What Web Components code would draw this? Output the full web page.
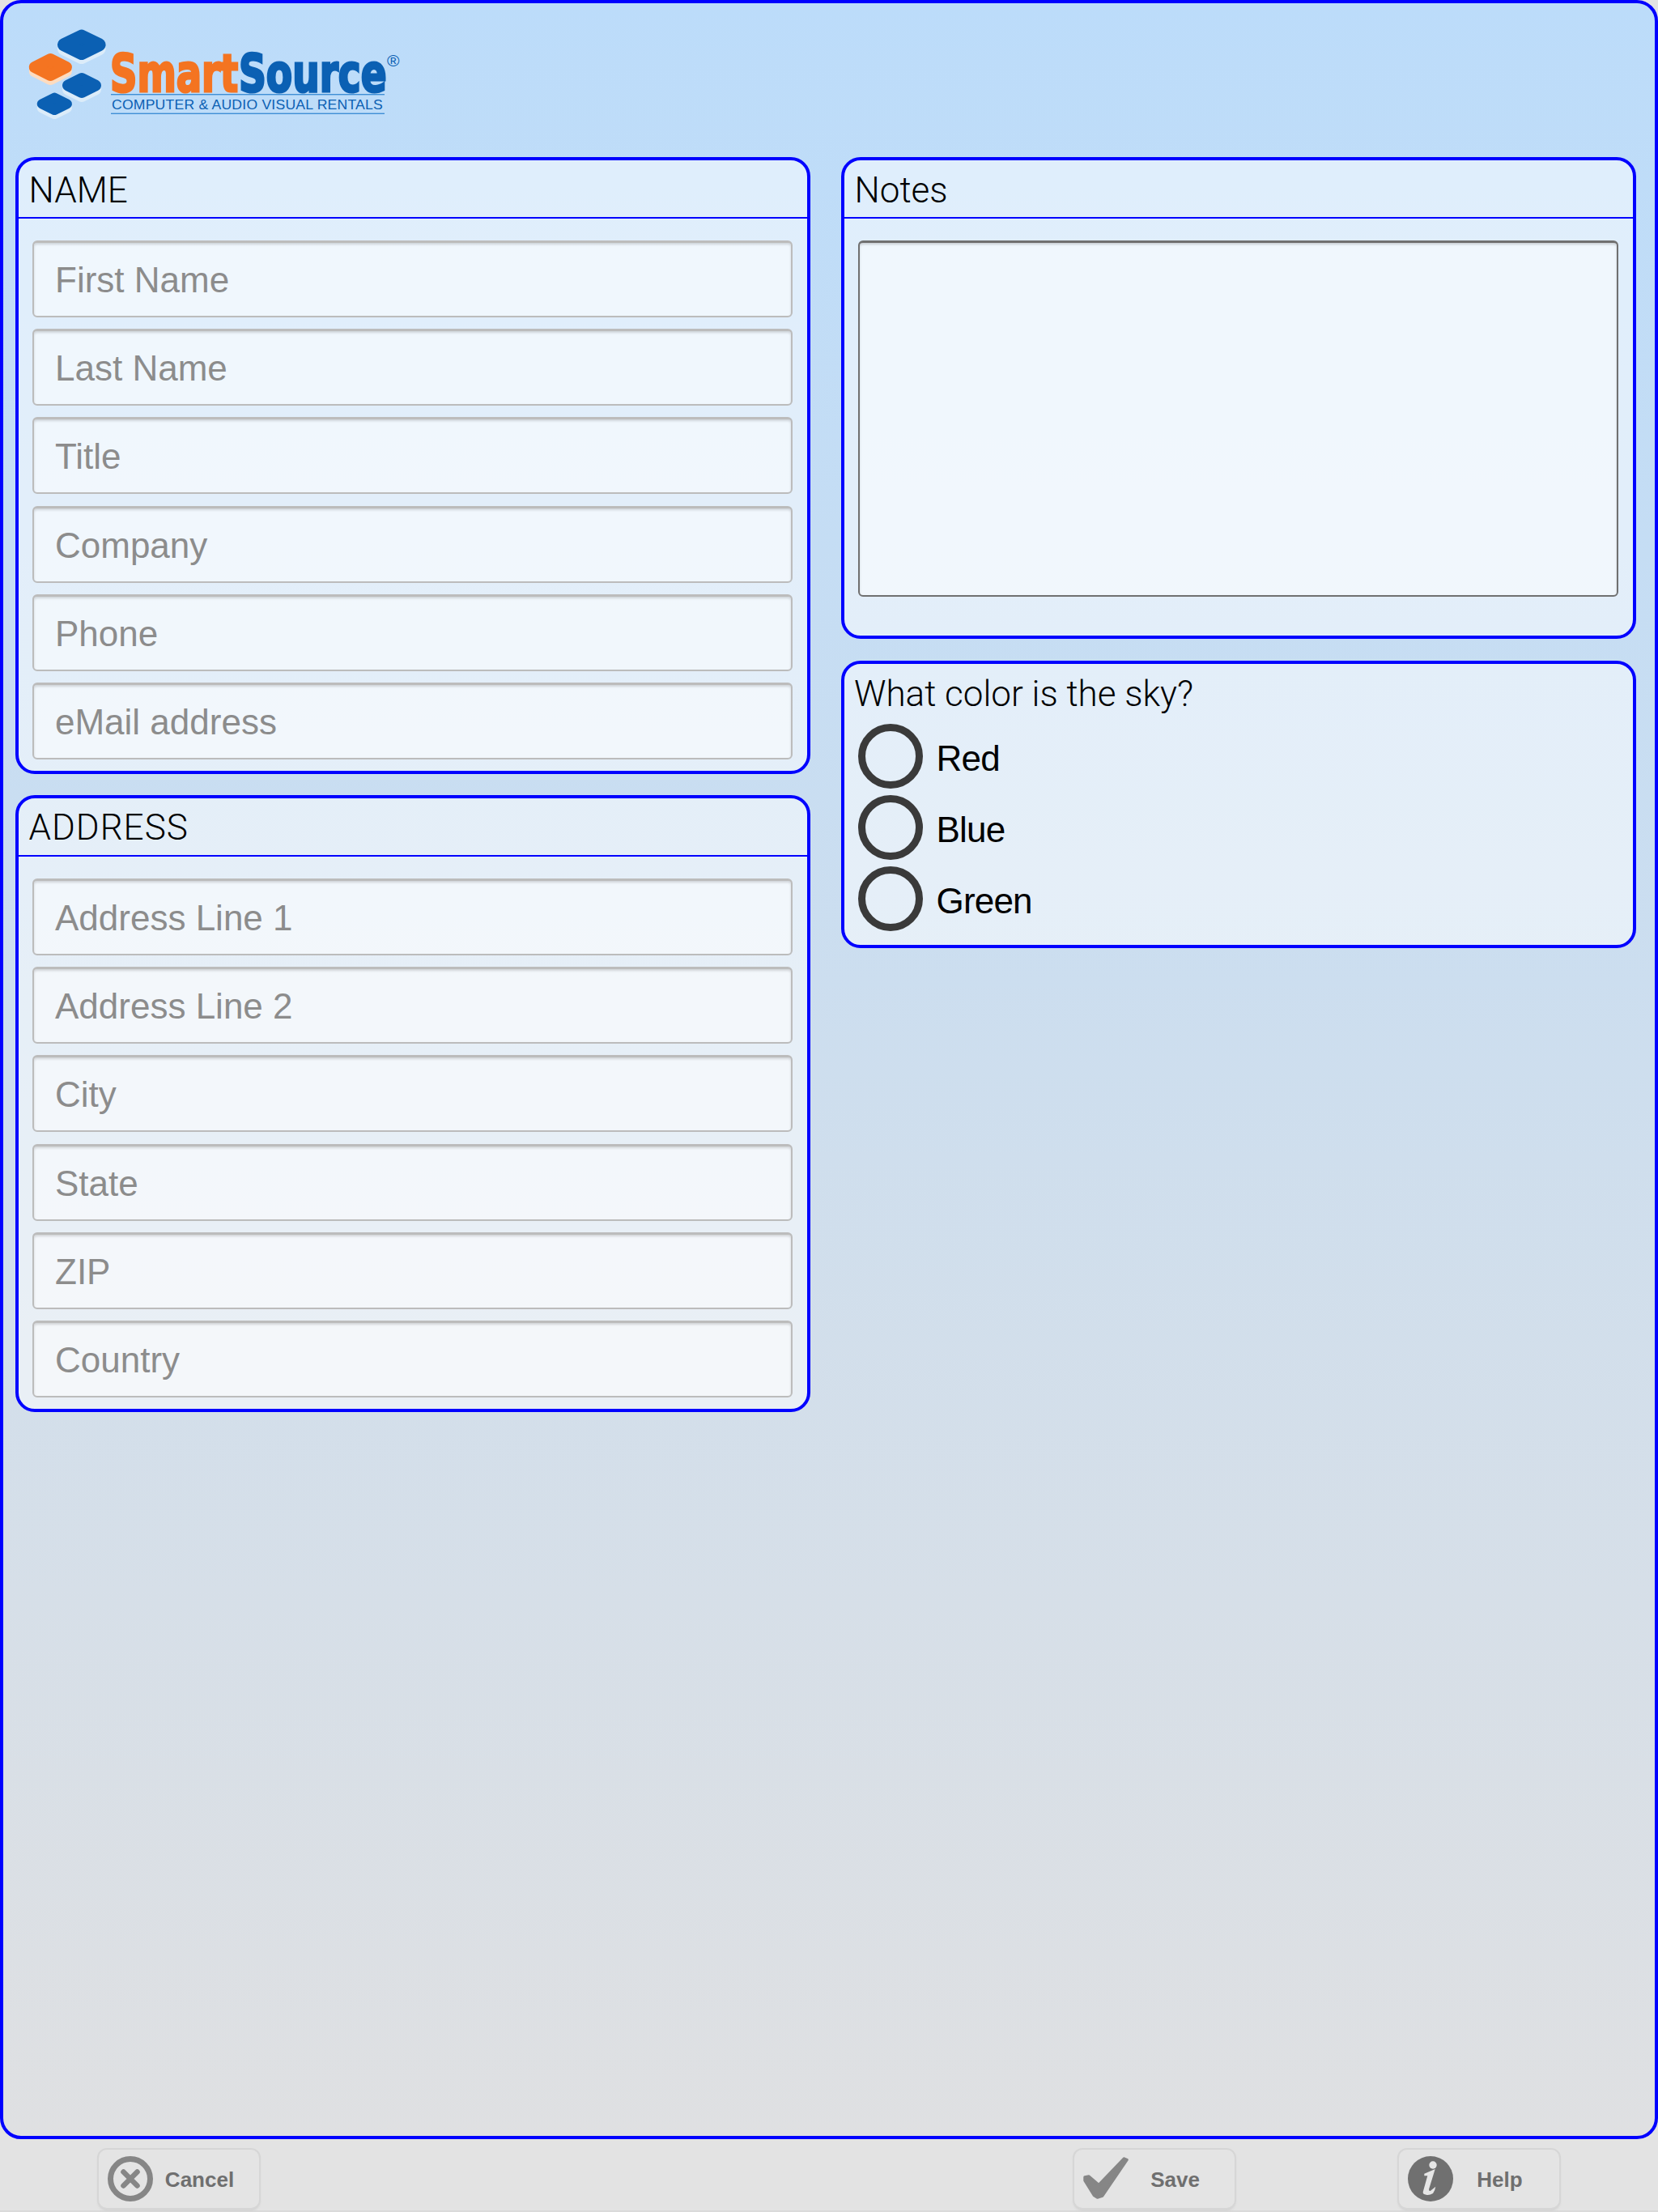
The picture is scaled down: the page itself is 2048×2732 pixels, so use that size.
<!DOCTYPE html>
<html>
<head>
<meta charset="utf-8">
<title>SmartSource form</title>
<style>
	html,body{ margin:0; padding:0; background:#e3e3e3; }
	body{ width:2048px; height:2732px; overflow:hidden; font-family:"Liberation Sans",Arial,sans-serif; }
</style>
</head>
<body>
<ss-app>
	<ss-logo></ss-logo>
	<ss-column slot="left">
		<ss-panel title="NAME">
			<ss-field>First Name</ss-field>
			<ss-field>Last Name</ss-field>
			<ss-field>Title</ss-field>
			<ss-field>Company</ss-field>
			<ss-field>Phone</ss-field>
			<ss-field>eMail address</ss-field>
		</ss-panel>
		<ss-panel title="ADDRESS" style="--title-spacing:1px">
			<ss-field>Address Line 1</ss-field>
			<ss-field>Address Line 2</ss-field>
			<ss-field>City</ss-field>
			<ss-field>State</ss-field>
			<ss-field>ZIP</ss-field>
			<ss-field>Country</ss-field>
		</ss-panel>
	</ss-column>
	<ss-column slot="right" style="gap:27px">
		<ss-panel title="Notes"><ss-notes></ss-notes></ss-panel>
		<ss-question title="What color is the sky?">
			<ss-radio>Red</ss-radio>
			<ss-radio>Blue</ss-radio>
			<ss-radio>Green</ss-radio>
		</ss-question>
	</ss-column>
	<ss-toolbar slot="footer">
		<ss-button icon="cancel" style="margin-left:122px">Cancel</ss-button>
		<ss-button icon="save" style="margin-left:1007px">Save</ss-button>
		<ss-button icon="help" style="margin-left:203px">Help</ss-button>
	</ss-toolbar>
</ss-app>
<script>
class SSApp extends HTMLElement{
	constructor(){
		super();
		const root = this.attachShadow({mode:'open'});
		root.innerHTML = `
			<style>
				:host{ display:block; width:2048px; height:2732px; }
				.frame{
					box-sizing:border-box;
					height:2642px;
					border:4px solid #0000ff;
					border-radius:26px;
					background:linear-gradient(180deg,#bcdcfa 0%,#dfe0e2 100%);
				}
				.cols{
					display:grid;
					grid-template-columns:982px 982px;
					column-gap:38px;
					padding-left:15px;
				}
			</style>
			<div class="frame">
				<slot></slot>
				<div class="cols">
					<slot name="left"></slot>
					<slot name="right"></slot>
				</div>
			</div>
			<slot name="footer"></slot>
		`;
	}
}
class SSLogo extends HTMLElement{
	constructor(){
		super();
		const root = this.attachShadow({mode:'open'});
		root.innerHTML = `
			<style>
				:host{ display:block; height:190px; }
				svg{ display:block; }
				text{ font-family:"Liberation Sans",Arial,sans-serif; }
				.big{ font-family:"DejaVu Sans","Liberation Sans",sans-serif; font-weight:700; font-size:64px; stroke-width:3; }
			</style>
			<svg width="510" height="190" viewBox="4 4 510 190">
				<g stroke-linejoin="round">
					<polygon points="79,60.3 100.8,49.6 122.6,60.3 100.8,71" fill="#dcecf9" stroke="#dcecf9" stroke-width="16"/>
					<polygon points="79,55.3 100.8,44.6 122.6,55.3 100.8,66" fill="#0b60b3" stroke="#0b60b3" stroke-width="16"/>
					<polygon points="42.7,88 62.3,78 82,88 62.3,98" fill="#fddcc0" stroke="#fddcc0" stroke-width="14"/>
					<polygon points="42.7,83 62.3,73 82,83 62.3,93" fill="#f47421" stroke="#f47421" stroke-width="14"/>
					<polygon points="84,110.5 101,102 118,110.5 101,119" fill="#dcecf9" stroke="#dcecf9" stroke-width="14"/>
					<polygon points="84,105.5 101,97 118,105.5 101,114" fill="#0b60b3" stroke="#0b60b3" stroke-width="14"/>
					<polygon points="51.7,133.3 67.3,125.6 82.9,133.3 67.3,141" fill="#dcecf9" stroke="#dcecf9" stroke-width="12"/>
					<polygon points="51.7,128.3 67.3,120.6 82.9,128.3 67.3,136" fill="#0b60b3" stroke="#0b60b3" stroke-width="12"/>
				</g>
				<text class="big" transform="translate(136 112.5) scale(.725 1)" fill="#f47421" stroke="#f47421">Smart</text>
				<text class="big" transform="translate(295 112.5) scale(.735 1)" fill="#0b60b3" stroke="#0b60b3">Source</text>
				<text x="478" y="82" font-size="21" fill="#0b60b3">®</text>
				<rect x="137" y="116" width="338" height="1.4" fill="#3f8fd6"/>
				<text transform="translate(138 135) scale(1.1 1)" font-size="16" letter-spacing=".2" fill="#0b60b3">COMPUTER &amp; AUDIO VISUAL RENTALS</text>
				<rect x="137" y="139.6" width="338" height="1.4" fill="#3f8fd6"/>
			</svg>
		`;
	}
}
class SSColumn extends HTMLElement{
	constructor(){
		super();
		const root = this.attachShadow({mode:'open'});
		root.innerHTML = `
			<style>
				:host{ display:flex; flex-direction:column; gap:26px; }
			</style>
			<slot></slot>
		`;
	}
}
class SSPanel extends HTMLElement{
	constructor(){
		super();
		const root = this.attachShadow({mode:'open'});
		root.innerHTML = `
			<style>
				:host{
					display:block;
					box-sizing:border-box;
					border:4px solid #0000ff;
					border-radius:24px;
					background:rgba(255,255,255,.5);
				}
				.head{
					box-sizing:border-box;
					height:72px;
					padding:3px 0 0 12.5px;
					display:flex;
					align-items:center;
					border-bottom:2px solid #0000ff;
					font:300 44px Roboto,"Liberation Sans",sans-serif;
					letter-spacing:var(--title-spacing,0);
					color:#000;
				}
				.body{
					padding:27px 18px 14px 17px;
					display:flex;
					flex-direction:column;
					gap:14.2px;
				}
			</style>
			<div class="head"></div>
			<div class="body"><slot></slot></div>
		`;
		root.querySelector('.head').textContent = this.getAttribute('title') || '';
	}
}
class SSField extends HTMLElement{
	constructor(){
		super();
		const root = this.attachShadow({mode:'open'});
		root.innerHTML = `
			<style>
				:host{
					display:flex;
					align-items:center;
					box-sizing:border-box;
					height:95px;
					padding:2px 0 0 26px;
					border:2px solid #bcbcbc;
					border-top-width:3px;
					border-radius:6px;
					background:rgba(255,255,255,.5);
					box-shadow:inset 0 2px 3px rgba(0,0,0,.14);
					font:44px "Liberation Sans",Arial,sans-serif;
					color:#8c8c8c;
				}
			</style>
			<slot></slot>
		`;
	}
}
class SSNotes extends HTMLElement{
	constructor(){
		super();
		const root = this.attachShadow({mode:'open'});
		root.innerHTML = `
			<style>
				:host{
					display:block;
					box-sizing:border-box;
					height:440px;
					margin-bottom:34px;
					border:2px solid #707070;
					border-top-width:3px;
					border-radius:6px;
					background:rgba(255,255,255,.5);
					box-shadow:inset 0 2px 3px rgba(0,0,0,.16);
				}
			</style>
		`;
	}
}
class SSQuestion extends HTMLElement{
	constructor(){
		super();
		const root = this.attachShadow({mode:'open'});
		root.innerHTML = `
			<style>
				:host{
					display:block;
					box-sizing:border-box;
					border:4px solid #0000ff;
					border-radius:24px;
					background:rgba(255,255,255,.5);
				}
				.head{
					box-sizing:border-box;
					height:70px;
					padding:4px 0 0 12px;
					display:flex;
					align-items:center;
					font:300 44px Roboto,"Liberation Sans",sans-serif;
					color:#000;
				}
				.body{
					padding:4px 17px 17px 17px;
					display:flex;
					flex-direction:column;
					gap:8px;
				}
			</style>
			<div class="head"></div>
			<div class="body"><slot></slot></div>
		`;
		root.querySelector('.head').textContent = this.getAttribute('title') || '';
	}
}
class SSRadio extends HTMLElement{
	constructor(){
		super();
		const root = this.attachShadow({mode:'open'});
		root.innerHTML = `
			<style>
				:host{
					display:flex;
					align-items:center;
					gap:16.5px;
					height:80px;
					font:44px "Liberation Sans",Arial,sans-serif;
					letter-spacing:-.8px;
					color:#000;
				}
				.dot{
					box-sizing:border-box;
					width:80px;
					height:80px;
					border:9px solid #3a3a3a;
					border-radius:50%;
				}
				.label{ padding-top:6px; }
			</style>
			<div class="dot"></div>
			<div class="label"><slot></slot></div>
		`;
	}
}
class SSToolbar extends HTMLElement{
	constructor(){
		super();
		const root = this.attachShadow({mode:'open'});
		root.innerHTML = `
			<style>
				:host{
					display:flex;
					box-sizing:border-box;
					height:90px;
					padding-top:13px;
					background:#e3e3e3;
					border-bottom:2px solid #d9d9d9;
				}
			</style>
			<slot></slot>
		`;
	}
}
const SS_ICONS = {
	cancel:`<svg width="56" height="56" viewBox="0 0 56 56"><circle cx="28" cy="28" r="24.5" fill="none" stroke="#868686" stroke-width="7"/><path d="M19.5 19.5L36.5 36.5M36.5 19.5L19.5 36.5" fill="none" stroke="#868686" stroke-width="6.5" stroke-linecap="round"/></svg>`,
	save:`<svg width="56" height="56" viewBox="0 0 56 56"><path d="M2 26L7 25L19.3 35.5L50.5 3L54 4.5L23.7 49L17.5 51L13.5 48.5L2 30Z" fill="#868686" stroke="#868686" stroke-width="3.5" stroke-linejoin="round"/></svg>`,
	help:`<svg width="56" height="56" viewBox="0 0 56 56"><circle cx="28" cy="28" r="28" fill="#707070"/><circle cx="31" cy="11" r="4.7" fill="#e6e6e6"/><path d="M20.3 21.7L33.7 16L26 41Q26 43.5 27.7 43L34.3 37.7Q33.5 43 31 46Q26.5 48.5 22.7 47.7Q18.5 47.5 18.7 44.3L24.3 24.3L20.3 24.3Z" fill="#e6e6e6"/></svg>`
};
class SSButton extends HTMLElement{
	constructor(){
		super();
		const root = this.attachShadow({mode:'open'});
		root.innerHTML = `
			<style>
				:host{
					display:flex;
					align-items:center;
					box-sizing:border-box;
					width:198px;
					height:72px;
					padding-left:11px;
					border-radius:10px;
					background:#e4e4e4;
					box-shadow:0 0 0 2px #d6d6d6, 0 2px 3px 1px #cfcfcf;
					font:700 26px "Liberation Sans",Arial,sans-serif;
					color:#6f6f6f;
				}
				svg{ display:block; flex:none; }
				.label{ flex:1; text-align:center; padding:3px 16px 0 0; }
			</style>
			<span class="icon"></span>
			<div class="label"><slot></slot></div>
		`;
		root.querySelector('.icon').innerHTML = SS_ICONS[this.getAttribute('icon')] || '';
	}
}
customElements.define('ss-app', SSApp);
customElements.define('ss-logo', SSLogo);
customElements.define('ss-column', SSColumn);
customElements.define('ss-panel', SSPanel);
customElements.define('ss-field', SSField);
customElements.define('ss-notes', SSNotes);
customElements.define('ss-question', SSQuestion);
customElements.define('ss-radio', SSRadio);
customElements.define('ss-toolbar', SSToolbar);
customElements.define('ss-button', SSButton);
</script>
</body>
</html>
